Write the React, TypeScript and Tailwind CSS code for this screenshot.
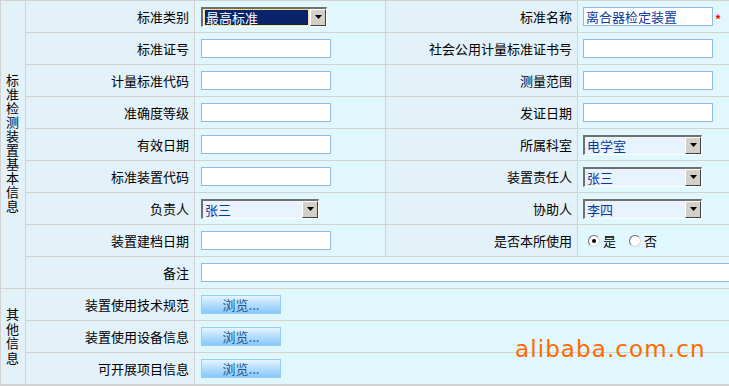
import React from "react";

const FONT = { fontFamily: '"Noto Sans CJK SC", "Noto Sans", sans-serif' };

function L({ children }: { children?: React.ReactNode }) {
  return (
    <div className="bg-[#e3f1f9] flex items-center justify-end pr-[5px] text-[13px] text-black">
      {children}
    </div>
  );
}

function V({ children, right, className = "" }: { children?: React.ReactNode; right?: boolean; className?: string }) {
  return (
    <div className={`bg-[#dff7fd] flex items-center ${right ? "pl-[5px]" : "pl-[6px]"} ${className}`}>
      {children}
    </div>
  );
}

function Input({ value, w = "w-[130px]" }: { value?: string; w?: string }) {
  return (
    <div className={`${w} h-[19px] border border-[#95b8e7] bg-white flex items-center px-[2px] text-[13px] text-[#0b3a9c] leading-none`}>
      {value}
    </div>
  );
}

function Select({ value, w, focused }: { value: string; w: string; focused?: boolean }) {
  return (
    <div className={`${w} h-[20px] flex border-t-2 border-l-2 border-t-[#6f6f6f] border-l-[#6f6f6f] border-b border-r border-b-white border-r-white bg-[#e9f3fd]`}>
      <div className="flex-1 flex items-center pl-[2px] pr-[2px]">
        {focused ? (
          <div className="w-full h-[15px] bg-[#0a246a] text-white text-[13px] leading-none flex items-center pl-[1px] outline-1 outline-dotted outline-[#e8d070]">
            {value}
          </div>
        ) : (
          <div className="text-[13px] leading-none text-[#0b3a9c]">{value}</div>
        )}
      </div>
      <div className="w-[16px] h-full bg-[#d4d0c8] border border-t-white border-l-white border-b-[#404040] border-r-[#404040] flex items-center justify-center">
        <svg width="7" height="4" viewBox="0 0 7 4">
          <polygon points="0,0 7,0 3.5,4" fill="#000" />
        </svg>
      </div>
    </div>
  );
}

function Browse() {
  return (
    <div className="w-[80px] h-[19px] border border-[#98cdf3] bg-gradient-to-b from-[#e6f5ff] via-[#b5defd] to-[#86c7f7] flex items-center justify-center text-[13px] leading-none text-[#1d568f]">
      浏览...
    </div>
  );
}

function Radio({ checked }: { checked?: boolean }) {
  return (
    <div className="w-[12px] h-[12px] rounded-full bg-white border border-t-[#6a6a6a] border-l-[#6a6a6a] border-b-[#d8d8d8] border-r-[#d8d8d8] flex items-center justify-center">
      {checked && <div className="w-[4px] h-[4px] rounded-full bg-black" />}
    </div>
  );
}

export default function App() {
  return (
    <div className="relative w-[729px] h-[386px] overflow-hidden bg-[#d2d2d2]" style={FONT}>
      <div className="grid grid-cols-[24px_168px_190px_191px_151px] grid-rows-[repeat(12,31px)] gap-px pt-px pl-px">
        <div className="row-span-9 bg-[#e3f1f9] flex items-center justify-center pb-[2px] pr-[1px]">
          <span className="[writing-mode:vertical-rl] text-[13px] leading-[13px] tracking-[1px]">
            标准检测装置基本信息
          </span>
        </div>

        <L>标准类别</L>
        <V>
          <Select value="最高标准" w="w-[126px]" focused />
        </V>
        <L>标准名称</L>
        <V right>
          <Input value="离合器检定装置" />
          <span className="text-[#ff0000] text-[12px] ml-[2px] mt-[4px] leading-none font-bold">*</span>
        </V>

        <L>标准证号</L>
        <V><Input /></V>
        <L>社会公用计量标准证书号</L>
        <V right><Input /></V>

        <L>计量标准代码</L>
        <V><Input /></V>
        <L>测量范围</L>
        <V right><Input /></V>

        <L>准确度等级</L>
        <V><Input /></V>
        <L>发证日期</L>
        <V right><Input /></V>

        <L>有效日期</L>
        <V><Input /></V>
        <L>所属科室</L>
        <V right><Select value="电学室" w="w-[119px]" /></V>

        <L>标准装置代码</L>
        <V><Input /></V>
        <L>装置责任人</L>
        <V right><Select value="张三" w="w-[119px]" /></V>

        <L>负责人</L>
        <V><Select value="张三" w="w-[118px]" /></V>
        <L>协助人</L>
        <V right><Select value="李四" w="w-[119px]" /></V>

        <L>装置建档日期</L>
        <V><Input /></V>
        <L>是否本所使用</L>
        <V right>
          <div className="flex items-center pl-[5px] text-[13px] leading-none">
            <Radio checked />
            <span className="ml-[3px]">是</span>
            <span className="ml-[13px]"><Radio /></span>
            <span className="ml-[3px]">否</span>
          </div>
        </V>

        <L>备注</L>
        <V className="col-span-3 overflow-hidden">
          <Input w="w-[560px] shrink-0" />
        </V>

        <div className="row-span-3 bg-[#e3f1f9] flex items-center justify-center pr-[1px]">
          <span className="[writing-mode:vertical-rl] text-[13px] leading-[13px] tracking-[1.5px]">
            其他信息
          </span>
        </div>
        <L>装置使用技术规范</L>
        <V className="col-span-3"><Browse /></V>
        <L>装置使用设备信息</L>
        <V className="col-span-3"><Browse /></V>
        <L>可开展项目信息</L>
        <V className="col-span-3"><Browse /></V>
      </div>

      <div
        className="absolute left-[515px] top-[338px] text-[#ff6a00] text-[23px] leading-none tracking-[1.1px]"
        style={{ fontFamily: '"DejaVu Sans", sans-serif' }}
      >
        alibaba.com.cn
      </div>
    </div>
  );
}
